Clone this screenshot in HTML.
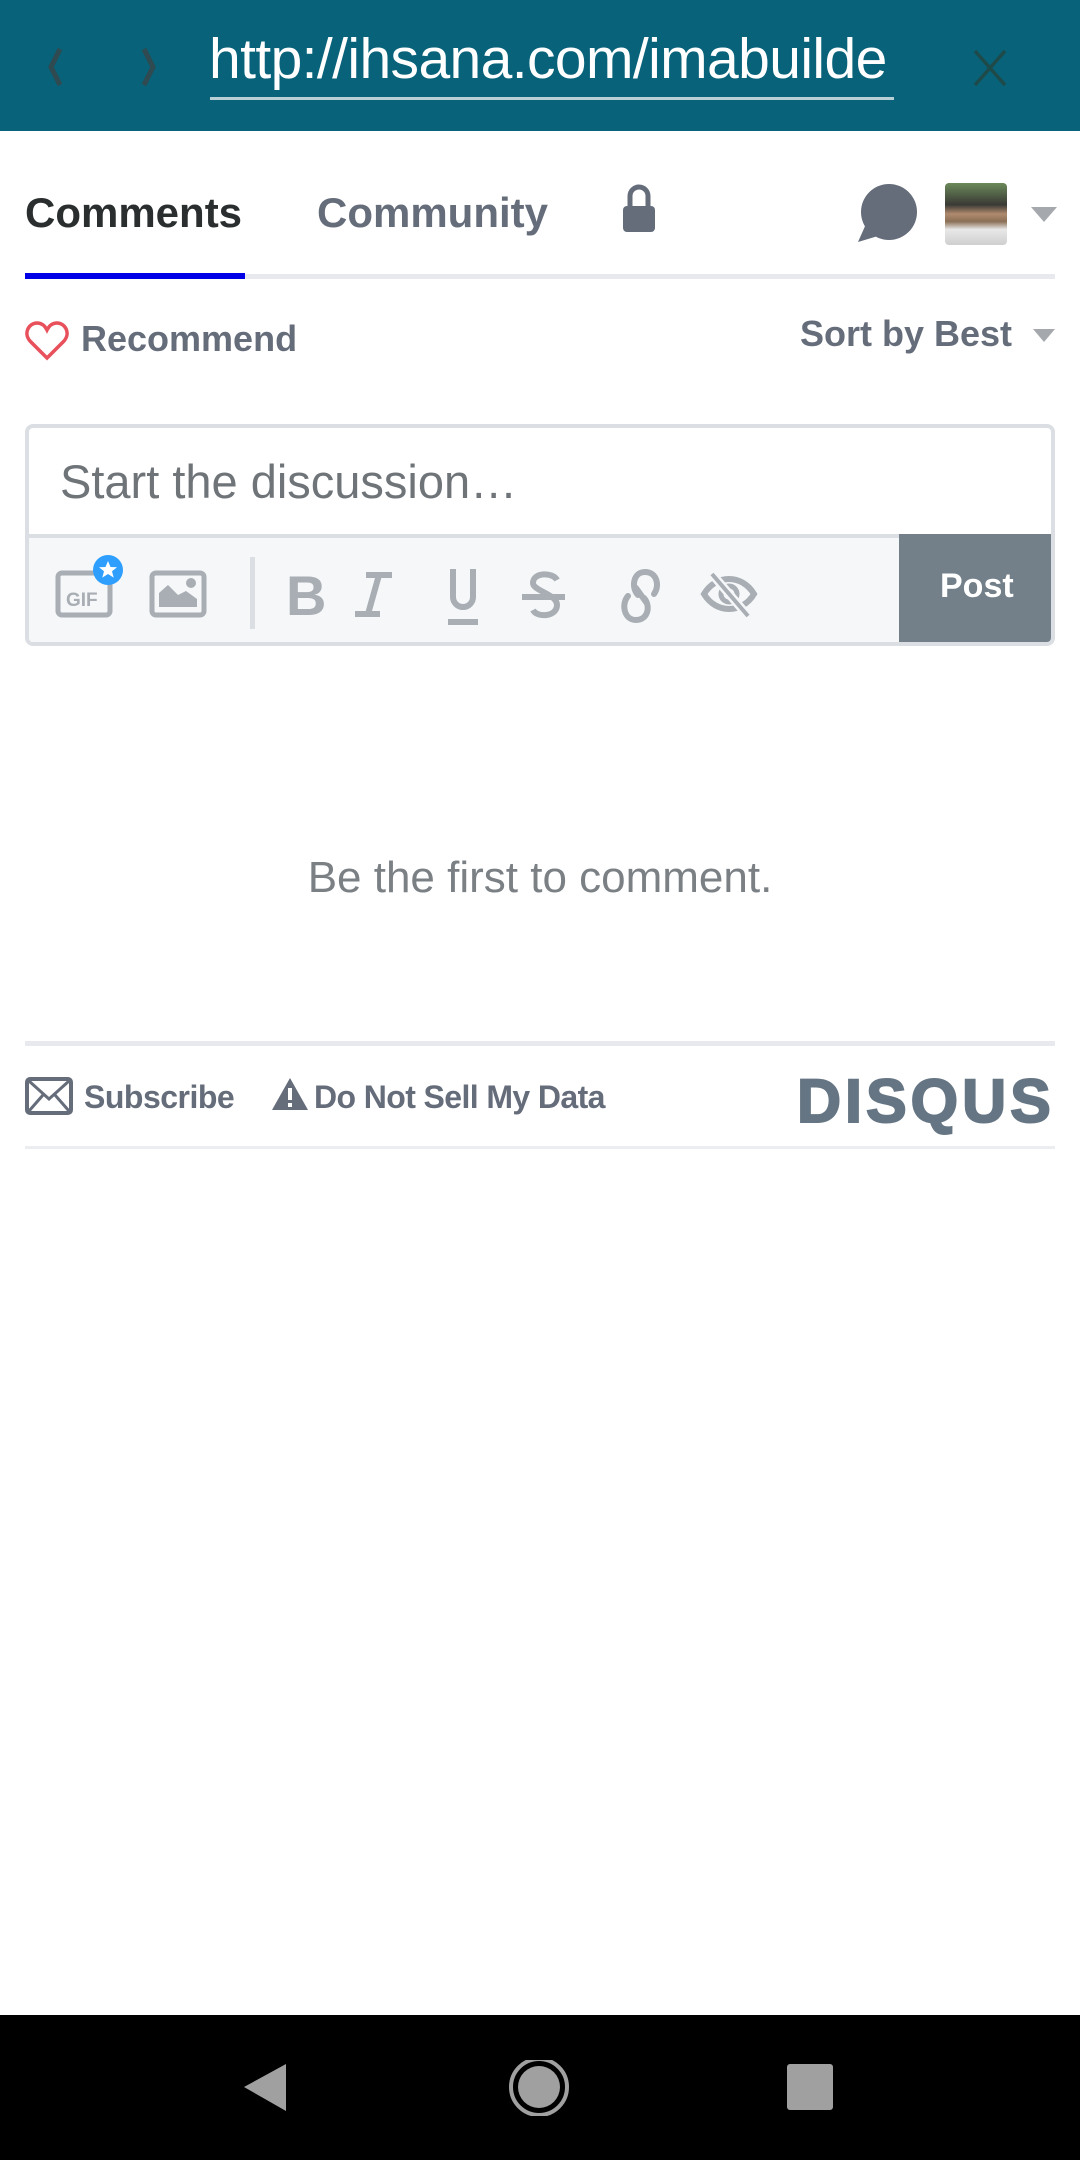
<!DOCTYPE html>
<html><head><meta charset="utf-8"><style>
*{margin:0;padding:0;box-sizing:border-box}
body{width:1080px;height:2160px;background:#fff;position:relative;overflow:hidden;font-family:"Liberation Sans",Arial,sans-serif}
.a{position:absolute;white-space:nowrap}
</style></head><body>
<div class="a" style="left:0;top:0;width:1080px;height:131px;background:#08627a"></div>
<svg class="a" style="left:40px;top:45px" width="40" height="45" viewBox="0 0 40 45"><path d="M20 4 L11 22 L20 40" stroke="#2f4a50" stroke-width="5" fill="none"/></svg>
<svg class="a" style="left:130px;top:45px" width="40" height="45" viewBox="0 0 40 45"><path d="M14 4 L23 22 L14 40" stroke="#2f4a50" stroke-width="5" fill="none"/></svg>
<div class="a" style="left:209px;top:26px;font-size:57px;color:#fff;letter-spacing:-0.6px">http://ihsana.com/imabuilde</div>
<div class="a" style="left:210px;top:97px;width:684px;height:3px;background:#b9d0d6"></div>
<svg class="a" style="left:970px;top:48px" width="40" height="40" viewBox="0 0 40 40"><path d="M5 3 L35 37 M35 3 L5 37" stroke="#1f4a4a" stroke-width="3.5"/></svg>

<div class="a" style="left:25px;top:189px;font-size:42px;font-weight:bold;color:#2a2e2e">Comments</div>
<div class="a" style="left:317px;top:189px;font-size:42px;font-weight:bold;color:#656c7a">Community</div>
<svg class="a" style="left:621px;top:184px" width="36" height="50" viewBox="0 0 36 50"><path d="M9 24 V12 a9 9 0 0 1 18 0 V24" stroke="#656c7a" stroke-width="5" fill="none"/><rect x="2" y="22" width="32" height="26" rx="4" fill="#656c7a"/></svg>
<svg class="a" style="left:856px;top:184px" width="62" height="62" viewBox="0 0 62 62"><ellipse cx="33" cy="28" rx="28" ry="28" fill="#656c7a"/><path d="M10 40 L2 58 L22 52 Z" fill="#656c7a"/></svg>
<div class="a" style="left:945px;top:183px;width:62px;height:62px;border-radius:4px;background:linear-gradient(180deg,#6b8a5a 0%,#3a3a35 35%,#b08a6e 50%,#8a6f55 62%,#e8e8e8 75%,#cfcfcf 100%)"></div>
<svg class="a" style="left:1031px;top:207px" width="26" height="16" viewBox="0 0 26 16"><path d="M0 0 H26 L13 15 Z" fill="#a5a9ad"/></svg>
<div class="a" style="left:25px;top:274px;width:1030px;height:5px;background:#e7e9ee"></div>
<div class="a" style="left:25px;top:273px;width:220px;height:6px;background:#0000e6"></div>

<svg class="a" style="left:25px;top:321px" width="44" height="40" viewBox="0 0 44 40"><path d="M22 37 L5 20 C-2 12 4 2 12 2 C17 2 20 5 22 9 C24 5 27 2 32 2 C40 2 46 12 39 20 Z" stroke="#e8505b" stroke-width="3.5" fill="none"/></svg>
<div class="a" style="left:81px;top:318px;font-size:36px;font-weight:bold;color:#656c7a">Recommend</div>
<div class="a" style="left:800px;top:313px;font-size:36px;font-weight:bold;color:#656c7a">Sort by Best</div>
<svg class="a" style="left:1033px;top:329px" width="22" height="14" viewBox="0 0 22 14"><path d="M0 0 H22 L11 13 Z" fill="#a5a9ad"/></svg>

<div class="a" style="left:25px;top:424px;width:1030px;height:222px;border:4px solid #dbdfe4;border-radius:8px;background:#fff;overflow:hidden">
 <div class="a" style="left:0;top:106px;width:1030px;height:116px;background:#f5f7f9;border-top:4px solid #dbdfe4"></div>
 <div class="a" style="left:870px;top:106px;width:160px;height:116px;background:#73808a"></div>
</div>
<div class="a" style="left:60px;top:454px;font-size:47px;color:#6f7479">Start the discussion…</div>
<div class="a" style="left:940px;top:567px;font-size:34px;font-weight:bold;color:#fff">Post</div>
<svg class="a" style="left:50px;top:555px" width="580" height="75" viewBox="0 0 580 75">
 <g fill="none" stroke="#a8aeb3" stroke-width="5">
  <rect x="8" y="18" width="52" height="42" rx="4"/>
  <rect x="102" y="18" width="52" height="42" rx="4"/>
 </g>
 <text x="16" y="51" font-family="Liberation Sans" font-weight="bold" font-size="19" fill="#a8aeb3">GIF</text>
 <circle cx="58" cy="15" r="15" fill="#2e9fff"/>
 <path d="M58 6 L60.5 12 L67 12.3 L62 16.3 L63.7 22.6 L58 19 L52.3 22.6 L54 16.3 L49 12.3 L55.5 12 Z" fill="#fff"/>
 <path d="M109 52 V38 L118 30 L128 40 L136 36 L147 44 V52 Z" fill="#a8aeb3"/><circle cx="141" cy="28" r="5" fill="#a8aeb3"/>
 <rect x="200" y="2" width="5" height="72" fill="#dbdfe4"/>
 <text x="236" y="60" font-family="Liberation Sans" font-weight="bold" font-size="56" fill="#a8aeb3">B</text>
 <path d="M316 20 H342 M329 20 L318 59 M305 59 H330" stroke="#a8aeb3" stroke-width="6" fill="none"/>
 <path d="M403 14 V42 a10 10 0 0 0 20 0 V14" stroke="#a8aeb3" stroke-width="6" fill="none"/><rect x="398" y="64" width="30" height="6" fill="#a8aeb3"/>
 <path d="M507 25 C503 17 483 17 483 28 C483 36 507 39 507 50 C507 62 487 63 483 55 M472 42 H515" stroke="#a8aeb3" stroke-width="6" fill="none"/>
</svg>
<svg class="a" style="left:616px;top:568px" width="50" height="56" viewBox="0 0 50 56"><g stroke="#a8aeb3" stroke-width="6" fill="none" stroke-linecap="round"><path d="M22 27 C15 20 17 4 29 4 C41 4 44 18 38 26"/><path d="M12 28 C5 36 8 52 20 52 C32 52 35 38 28 30"/><path d="M20 20 L30 34"/></g></svg>
<svg class="a" style="left:700px;top:570px" width="60" height="50" viewBox="0 0 60 50"><path d="M4 24 C16 4 42 4 54 24 C42 44 16 44 4 24 Z" stroke="#a8aeb3" stroke-width="6" fill="none"/><circle cx="29" cy="24" r="8" stroke="#a8aeb3" stroke-width="5" fill="none"/><path d="M12 4 L48 46" stroke="#f5f7f9" stroke-width="9"/><path d="M12 4 L48 46" stroke="#a8aeb3" stroke-width="4"/></svg>

<div class="a" style="left:0;width:1080px;top:853px;text-align:center;font-size:44px;color:#7b8085">Be the first to comment.</div>

<div class="a" style="left:25px;top:1041px;width:1030px;height:5px;background:#e7e9ee"></div>
<svg class="a" style="left:25px;top:1077px" width="48" height="38" viewBox="0 0 48 38"><rect x="2" y="2" width="44" height="34" rx="3" stroke="#656c7a" stroke-width="4" fill="none"/><path d="M4 4 L24 22 L44 4 M4 34 L18 18 M44 34 L30 18" stroke="#656c7a" stroke-width="3" fill="none"/></svg>
<div class="a" style="left:84px;top:1079px;font-size:32px;font-weight:bold;color:#656c7a;letter-spacing:-0.5px">Subscribe</div>
<svg class="a" style="left:271px;top:1077px" width="38" height="34" viewBox="0 0 38 34"><path d="M19 1 L37 33 H1 Z" fill="#656c7a"/><rect x="17" y="11" width="4" height="12" fill="#fff"/><rect x="17" y="26" width="4" height="4" fill="#fff"/></svg>
<div class="a" style="left:314px;top:1079px;font-size:32px;font-weight:bold;color:#656c7a;letter-spacing:-0.6px">Do Not Sell My Data</div>
<div class="a" style="left:797px;top:1066px;font-size:61px;font-weight:bold;color:#657583;letter-spacing:4px;-webkit-text-stroke:2px #657583">DISQUS</div>
<div class="a" style="left:25px;top:1146px;width:1030px;height:3px;background:#ebedf0"></div>

<div class="a" style="left:0;top:2015px;width:1080px;height:145px;background:#000"></div>
<svg class="a" style="left:240px;top:2060px" width="600" height="56" viewBox="0 0 600 56"><path d="M4 27 L46 4 V51 Z" fill="#a0a0a0"/><circle cx="299" cy="27" r="28" stroke="#a0a0a0" stroke-width="4" fill="none"/><circle cx="299" cy="27" r="21" fill="#a0a0a0"/><rect x="547" y="4" width="46" height="46" rx="3" fill="#a0a0a0"/></svg>
</body></html>
